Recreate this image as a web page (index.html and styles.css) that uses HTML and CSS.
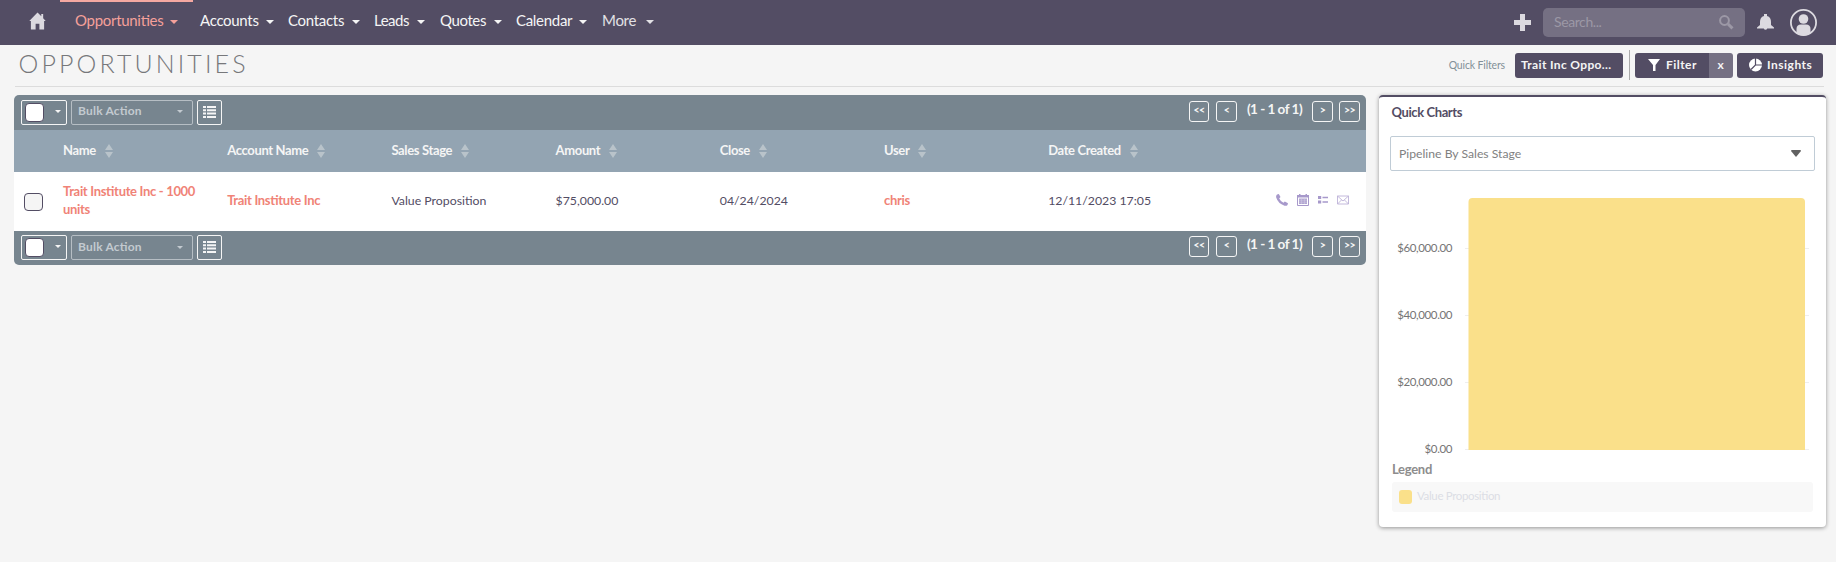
FILE: index.html
```
<!DOCTYPE html>
<html lang="en">
<head>
<meta charset="utf-8">
<title>Opportunities</title>
<link rel="stylesheet" href="styles.css">
</head>
<body>
<svg class="defs" width="0" height="0">
  <symbol id="sort" viewBox="0 0 8 14"><path d="M4 0L8 6H0zM4 14L0 8h8z" fill="#b9c3ca"/></symbol>
  <symbol id="list" viewBox="0 0 13 12"><path d="M0 0h3v2H0zM4 0h9v2H4zM0 3.300h3v2H0zM4 3.300h9v2H4zM0 6.600h3v2H0zM4 6.600h9v2H4zM0 10h3v2H0zM4 10h9v2H4z" fill="#f5f5f5"/></symbol>
</svg>
<header class="navbar">
  <svg class="home" viewBox="0 0 18 18"><path d="M9 0L0.3 9H2v9h5v-6h4v6h5V9h1.7L15 6V1.5h-2V4z" fill="#dcdae0"/></svg>
  <nav class="menu">
    <a class="item active">Opportunities<i class="caret"></i></a>
    <a class="item accounts">Accounts<i class="caret"></i></a>
    <a class="item contacts">Contacts<i class="caret"></i></a>
    <a class="item leads">Leads<i class="caret"></i></a>
    <a class="item quotes">Quotes<i class="caret"></i></a>
    <a class="item calendar">Calendar<i class="caret"></i></a>
    <a class="item more">More<i class="caret"></i></a>
  </nav>
  <div class="tools">
    <svg class="plus" viewBox="0 0 17 17"><path d="M6 0h5v6h6v5h-6v6H6v-6H0V6h6z" fill="#dcdae0"/></svg>
    <div class="search"><span>Search...</span>
      <svg width="15" height="15" viewBox="0 0 15 15"><circle cx="5.500" cy="5.500" r="4.400" fill="none" stroke="#9c98a6" stroke-width="2"/><path d="M9 9l4.500 4.300" stroke="#9c98a6" stroke-width="3"/></svg>
    </div>
    <svg class="bell" viewBox="0 0 17 17"><path d="M7 0h3v2c3 .8 4 3 4 6v3l3 2.500V14.500H10.200a1.800 1.800 0 0 1-3.400 0H0V13.500l3-2.500V8c0-3 1-5.200 4-6z" fill="#dcdae0"/></svg>
    <svg class="avatar" viewBox="0 0 27 27"><circle cx="13.500" cy="13.500" r="12.600" fill="none" stroke="#dcdae0" stroke-width="1.800"/><circle cx="13.500" cy="10" r="4.800" fill="#dcdae0"/><path d="M6.500 24.500V20q0-4.500 4.500-4.500h5q4.500 0 4.500 4.500v4.500q-7 4-14 0z" fill="#dcdae0"/></svg>
  </div>
</header>
<section class="heading">
  <h1>OPPORTUNITIES</h1>
  <div class="filters">
    <span class="quick">Quick Filters</span>
    <a class="btn saved">Trait Inc Oppo...</a>
    <span class="rule"></span>
    <a class="btn filter"><svg width="12" height="12" viewBox="0 0 12 12"><path d="M0 0h12L7.500 6v6H5V6z" fill="#fff"/></svg>Filter</a><a class="btn clear">x</a>
    <a class="btn insights"><svg width="14" height="14" viewBox="0 0 14 14"><circle cx="6.500" cy="7" r="6.500" fill="#fff"/><path d="M6.500 0v7L2 11.500M6.500 7H14" fill="none" stroke="#534d64" stroke-width="1.200"/></svg>Insights</a>
  </div>
</section>
<main class="content">
  <section class="list">
    <div class="bar top">
      <span class="box select"><i class="check"></i><i class="caret"></i></span>
      <span class="box bulk">Bulk Action<i class="caret"></i></span>
      <span class="box cols"><svg width="13" height="12"><use href="#list"/></svg></span>
      <div class="pager"><b class="first">&lt;&lt;</b><b class="prev">&lt;</b><span>(1 - 1 of 1)</span><b class="next">&gt;</b><b class="last">&gt;&gt;</b></div>
    </div>
    <div class="row head">
      <span class="pick"></span>
      <span>Name<svg class="sort"><use href="#sort"/></svg></span>
      <span>Account Name<svg class="sort"><use href="#sort"/></svg></span>
      <span>Sales Stage<svg class="sort"><use href="#sort"/></svg></span>
      <span>Amount<svg class="sort"><use href="#sort"/></svg></span>
      <span>Close<svg class="sort"><use href="#sort"/></svg></span>
      <span>User<svg class="sort"><use href="#sort"/></svg></span>
      <span>Date Created<svg class="sort"><use href="#sort"/></svg></span>
    </div>
    <div class="row data">
      <span class="pick"><i class="check"></i></span>
      <span class="link name">Trait Institute Inc - 1000 units</span>
      <span class="link">Trait Institute Inc</span>
      <span class="plain">Value Proposition</span>
      <span class="plain">$75,000.00</span>
      <span class="plain">04/24/2024</span>
      <span class="link">chris</span>
      <span class="plain">12/11/2023 17:05</span>
      <div class="actions">
        <svg width="12" height="12" viewBox="0 0 12 12"><path d="M1 0.500L2.800 0 4.500 3 3.200 4.500Q4.500 7.300 7.500 8.800L8.800 7.600 12 9.300 11.500 11Q10.500 12.200 8.500 11.700 2 9.500 0.200 3.500-.2 1.500 1 .5z" fill="#a799cb"/></svg>
        <svg width="12" height="12" viewBox="0 0 12 12"><path d="M0 1h12v2.500H0z" fill="#a799cb"/><path d="M2 0h1.500v2H2zM8.500 0H10v2H8.500z" fill="#a799cb"/><path d="M.5 3v8.500h11V3" fill="none" stroke="#a799cb"/><path d="M2 4.500h8V10H2z" fill="#b1a5d1"/><path d="M2 6.200h8M2 8.200h8M4.500 4.500V10M7.500 4.500V10" stroke="#d3cce5" stroke-width=".5"/></svg>
        <svg width="10" height="8" viewBox="0 0 10 8"><path d="M0 0h3.200v3H0zM0 4.500h3.200v3H0zM4.500.7H10v1.600H4.500zM4.500 5.200H10v1.600H4.500z" fill="#a799cb"/></svg>
        <svg width="12" height="10" viewBox="0 0 12 10"><path d="M.5 1h11v8H.5zM.5 1L6 6l5.500-5M.5 9L4.500 5M11.500 9L7.500 5" fill="none" stroke="#bdb2d8" stroke-width=".9"/></svg>
      </div>
    </div>
    <div class="bar bottom">
      <span class="box select"><i class="check"></i><i class="caret"></i></span>
      <span class="box bulk">Bulk Action<i class="caret"></i></span>
      <span class="box cols"><svg width="13" height="12"><use href="#list"/></svg></span>
      <div class="pager"><b class="first">&lt;&lt;</b><b class="prev">&lt;</b><span>(1 - 1 of 1)</span><b class="next">&gt;</b><b class="last">&gt;&gt;</b></div>
    </div>
  </section>
  <aside class="panel">
    <h2>Quick Charts</h2>
    <div class="dropdown">Pipeline By Sales Stage<svg width="10" height="7" viewBox="0 0 10 7"><path d="M0 1Q0 0 1 0H9Q10 0 10 1L5 7z" fill="#616161"/></svg></div>
    <div class="chart">
      <div class="axis"><span>$60,000.00</span><span>$40,000.00</span><span>$20,000.00</span><span>$0.00</span></div>
      <svg width="344" height="253" viewBox="0 0 344 253"><path d="M0 50.500H344M0 117.500H344M0 184.500H344M0 251.500H344" stroke="#eee"/><path d="M3.500 252V4Q3.500 0 7.500 0H336Q340 0 340 4V252z" fill="#fae08a"/></svg>
    </div>
    <h3>Legend</h3>
    <div class="legend"><i class="swatch"></i>Value Proposition</div>
  </aside>
</main>
</body>
</html>
```
FILE: styles.css
```
* { box-sizing: border-box; }
body { margin: 0; width: 1836px; height: 562px; overflow: hidden; background: #f5f5f5; font-family: Lato, sans-serif; font-size: 13px; color: #534d64; font-feature-settings: "liga" 1; }
.defs { position: absolute; }
svg { display: block; flex: none; }
.navbar { height: 45px; background: #534d64; display: flex; align-items: flex-start; padding-left: 29px; }
.home { width: 17px; height: 18px; margin-top: 12px; }
.menu { display: flex; margin-left: 14px; }
.item { height: 45px; display: flex; align-items: flex-start; justify-content: space-between; padding-top: 11px; line-height: 18px; font-size: 15px; letter-spacing: -.3px; color: #f5f5f5; white-space: nowrap; margin-right: 14px; }
.caret { flex: none; width: 0; height: 0; border: 4px solid transparent; border-top-color: currentColor; border-bottom: 0; }
.item .caret { margin-top: 9px; }
.active { width: 133px; margin-right: 7px; padding: 9px 15px 0; border-top: 2px solid #f5a8a1; color: #f5a09a; }
.accounts { width: 74px; }
.contacts { width: 72px; margin-right: 14px; }
.leads { width: 51px; margin-right: 15px; letter-spacing: -.5px; }
.quotes { width: 62px; letter-spacing: -.4px; }
.calendar { width: 71px; margin-right: 15px; }
.more { width: 52px; color: #e2e1e5; }
.tools { display: flex; align-items: flex-start; margin-left: auto; padding-right: 19px; }
.plus { width: 17px; height: 17px; margin: 14px 12px 0 0; }
.search { width: 202px; height: 29px; margin-top: 8px; border-radius: 5px; background: #757083; display: flex; justify-content: space-between; padding: 7px 11px 0; color: #9c98a6; font-size: 14px; letter-spacing: -.4px; line-height: 13px; }
.bell { width: 17px; height: 17px; margin: 14px 16px 0 12px; }
.avatar { width: 27px; height: 27px; margin-top: 9px; }
.heading { height: 42px; margin: 0 12px 0 15px; border-bottom: 1px solid #dcdcdc; display: flex; justify-content: space-between; }
h1 { margin: 3px 0 0 3.500px; font-size: 25px; line-height: 30px; font-weight: 300; letter-spacing: 3.100px; color: #77787b; }
.filters { display: flex; padding: 8px 1px 0 0; }
.quick { font-size: 10.500px; letter-spacing: -.15px; line-height: 25px; color: #829098; margin-right: 10px; white-space: nowrap; }
.btn { height: 25px; border-radius: 3px; background: #534d64; color: #f5f5f5; font-size: 12px; font-weight: 700; letter-spacing: .6px; line-height: 23px; padding-bottom: 2px; display: flex; align-items: center; white-space: nowrap; }
.saved { width: 108px; padding-left: 6px; letter-spacing: .35px; }
.rule { width: 1px; height: 30px; margin: -3px 5px 0 6px; background: #aaa; }
.filter { width: 74px; padding-left: 13px; gap: 6px; border-radius: 3px 0 0 3px; letter-spacing: .45px; }
.clear { width: 24px; justify-content: center; border-radius: 0 3px 3px 0; background: #757083; margin-right: 4px; }
.insights { width: 86px; padding-left: 12px; gap: 4px; letter-spacing: .5px; }
.content { display: flex; align-items: flex-start; padding: 8px 10px 0 14px; justify-content: space-between; }
.list { width: 1352px; height: 170px; border-radius: 5px; overflow: hidden; }
.bar { background: #77858f; height: 35px; display: flex; padding: 5px 6px 0 7px; }
.bottom { height: 34px; padding-top: 4px; }
.box { height: 25px; border: 1px solid #f5f5f5; border-radius: 2px; display: flex; align-items: center; color: #f5f5f5; margin-right: 4px; }
.select { width: 46px; justify-content: space-between; padding: 0 5px 2px 3px; }
.select .caret { border-width: 3px 3px 0; }
.select .check { background: #fff; margin-top: 2px; }
.check { flex: none; width: 19px; height: 19px; border: 1px solid #534d64; border-radius: 4px; background: #f5f5f5; }
.bulk { width: 122px; justify-content: space-between; padding: 0 9px 4px 6px; font-size: 12px; font-weight: 700; letter-spacing: .2px; color: #c3cad0; border-color: #b6bec4; }
.bulk .caret { border-width: 3px 3px 0; margin-top: 1px; }
.bottom .bulk { padding-bottom: 2px; }
.cols { width: 25px; padding: 0 0 2px 5px; }
.pager { display: flex; margin-left: auto; }
.pager b { width: 21px; height: 21px; margin-top: 1px; border: 1px solid #f5f5f5; border-radius: 3px; color: #f5f5f5; font-size: 10.500px; letter-spacing: -.6px; line-height: 17px; text-align: center; }
.pager .first { width: 20px; margin-right: 7px; }
.pager .last { margin-left: 6px; }
.pager span { width: 75px; text-align: center; font-weight: 700; font-size: 13.500px; letter-spacing: -.5px; line-height: 19px; color: #f5f5f5; white-space: nowrap; }
.row { display: grid; grid-template-columns: 49px repeat(7, 164.200px) 1fr; align-items: center; }
.head { height: 42px; background: #93a4b2; color: #f5f5f5; font-size: 13px; font-weight: 700; letter-spacing: -.35px; }
.head span { display: flex; align-items: center; padding-bottom: 3px; }
.sort { width: 8px; height: 14px; margin-left: 9px; margin-top: 3px; }
.data { height: 59px; background: #fff; }
.pick .check { display: block; margin: 1px 0 0 10px; height: 18px; }
.link { color: #f08377; font-weight: 700; padding-bottom: 4px; letter-spacing: -.32px; }
.name { padding: 0 20px 4px 0; line-height: 18px; }
.plain { font-size: 12.300px; padding-bottom: 2px; white-space: nowrap; }
.actions { display: flex; align-items: center; gap: 9px; padding: 0 0 3px 64px; }
.panel { width: 447px; height: 432px; background: #fff; border-top: 2px solid #534d64; border-radius: 4px; box-shadow: 0 1px 4px rgba(0,0,0,.4); padding: 0 11px; }
h2 { margin: 6px 0 0 1.500px; font-size: 13px; line-height: 18px; letter-spacing: -.4px; }
.dropdown { height: 35px; margin-top: 15px; border: 1px solid #c0ccd6; border-radius: 2px; display: flex; align-items: center; justify-content: space-between; padding: 0 13px 0 8px; font-size: 12.200px; color: #818181; }
.chart { display: flex; justify-content: space-between; margin-top: 27px; padding: 0 6px 0 5px; height: 253px; }
.axis { width: 57px; display: flex; flex-direction: column; gap: 51px; padding-top: 42px; font-size: 11.500px; letter-spacing: -.4px; line-height: 16px; text-align: right; color: #757575; }
h3 { margin: 9px 0 0 2px; font-size: 13px; letter-spacing: -.3px; line-height: 18px; color: #8d8d8d; }
.legend { margin: 4px 2px 0; height: 30px; border-radius: 3px; background: #f8f8f8; display: flex; align-items: center; padding: 0 7px 4px; gap: 5px; font-size: 11.500px; letter-spacing: -.35px; color: #dcdee5; }
.swatch { width: 13px; height: 14px; border-radius: 3px; background: #fae08a; margin-top: 3px; }
```
